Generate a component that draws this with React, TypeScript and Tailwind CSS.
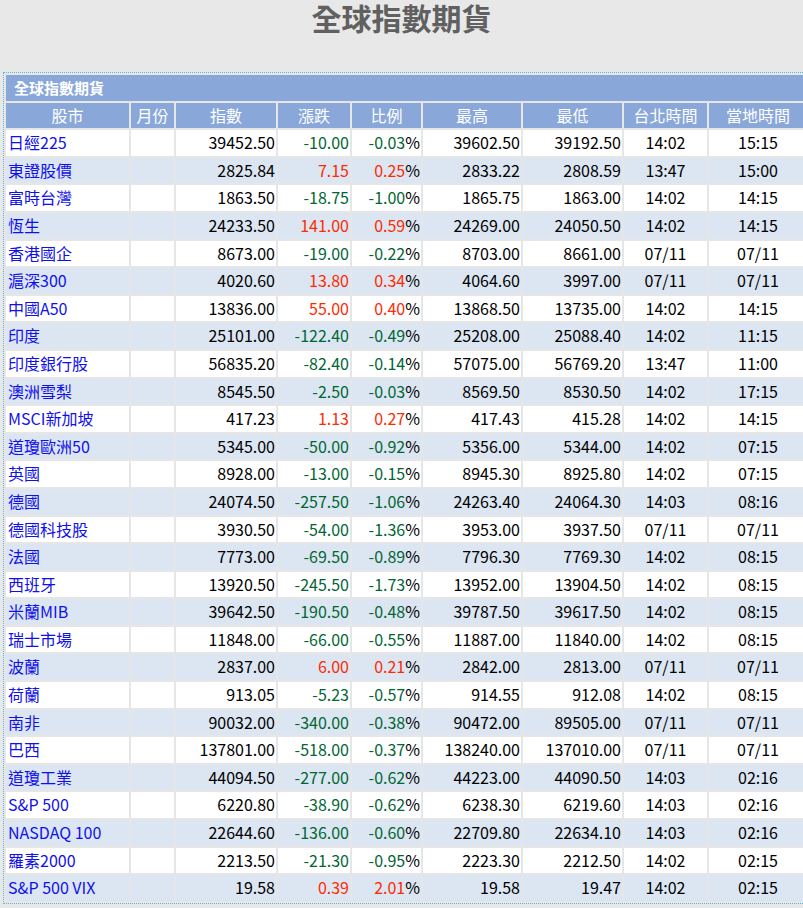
const rows: string[][] = [
["日經225","39452.50","-10.00","-0.03","39602.50","39192.50","14:02","15:15"],
["東證股價","2825.84","7.15","0.25","2833.22","2808.59","13:47","15:00"],
["富時台灣","1863.50","-18.75","-1.00","1865.75","1863.00","14:02","14:15"],
["恆生","24233.50","141.00","0.59","24269.00","24050.50","14:02","14:15"],
["香港國企","8673.00","-19.00","-0.22","8703.00","8661.00","07/11","07/11"],
["滬深300","4020.60","13.80","0.34","4064.60","3997.00","07/11","07/11"],
["中國A50","13836.00","55.00","0.40","13868.50","13735.00","14:02","14:15"],
["印度","25101.00","-122.40","-0.49","25208.00","25088.40","14:02","11:15"],
["印度銀行股","56835.20","-82.40","-0.14","57075.00","56769.20","13:47","11:00"],
["澳洲雪梨","8545.50","-2.50","-0.03","8569.50","8530.50","14:02","17:15"],
["MSCI新加坡","417.23","1.13","0.27","417.43","415.28","14:02","14:15"],
["道瓊歐洲50","5345.00","-50.00","-0.92","5356.00","5344.00","14:02","07:15"],
["英國","8928.00","-13.00","-0.15","8945.30","8925.80","14:02","07:15"],
["德國","24074.50","-257.50","-1.06","24263.40","24064.30","14:03","08:16"],
["德國科技股","3930.50","-54.00","-1.36","3953.00","3937.50","07/11","07/11"],
["法國","7773.00","-69.50","-0.89","7796.30","7769.30","14:02","08:15"],
["西班牙","13920.50","-245.50","-1.73","13952.00","13904.50","14:02","08:15"],
["米蘭MIB","39642.50","-190.50","-0.48","39787.50","39617.50","14:02","08:15"],
["瑞士市場","11848.00","-66.00","-0.55","11887.00","11840.00","14:02","08:15"],
["波蘭","2837.00","6.00","0.21","2842.00","2813.00","07/11","07/11"],
["荷蘭","913.05","-5.23","-0.57","914.55","912.08","14:02","08:15"],
["南非","90032.00","-340.00","-0.38","90472.00","89505.00","07/11","07/11"],
["巴西","137801.00","-518.00","-0.37","138240.00","137010.00","07/11","07/11"],
["道瓊工業","44094.50","-277.00","-0.62","44223.00","44090.50","14:03","02:16"],
["S&P 500","6220.80","-38.90","-0.62","6238.30","6219.60","14:03","02:16"],
["NASDAQ 100","22644.60","-136.00","-0.60","22709.80","22634.10","14:03","02:16"],
["羅素2000","2213.50","-21.30","-0.95","2223.30","2212.50","14:02","02:15"],
["S&P 500 VIX","19.58","0.39","2.01","19.58","19.47","14:02","02:15"],
];
const widths = [123,43,100,72,69,98,99,83,98];
const heads = ["股市","月份","指數","漲跌","比例","最高","最低","台北時間","當地時間"];
export default function App() {
  return (
    <div className="w-[803px] h-[908px] overflow-hidden bg-[#e8e8e8] text-[16px]" style={{fontFamily:'"Noto Sans CJK TC","Noto Sans",sans-serif'}}>
      <h1 className="h-[36px] text-center text-[30px] font-bold leading-[34px] text-[#606060]">全球指數期貨</h1>
      <div className="mt-[36px] ml-[3px] w-[820px] border border-dotted border-[#5ab4dc]">
        <table className="table-fixed border-separate border-spacing-[2px] bg-[#e6e6e6] leading-[25.6px]" style={{width:805}}>
          <colgroup>{widths.map((w,i)=><col key={i} style={{width:w}}/>)}</colgroup>
          <tbody>
            <tr><td colSpan={9} className="bg-[#8aa7da] px-[8px] text-[15px] font-bold text-white">全球指數期貨</td></tr>
            <tr>{heads.map(h=><td key={h} className="bg-[#8aa7da] text-center text-white whitespace-nowrap">{h}</td>)}</tr>
            {rows.map((r,i)=>{
              const up = !r[2].startsWith("-");
              const c = up ? "text-[#ff2a00]" : "text-[#006633]";
              const bg = i%2 ? "bg-[#dce6f2]" : "bg-white";
              return (
                <tr key={i} className={bg}>
                  <td className="px-[2px] text-[#1010ee] whitespace-nowrap overflow-hidden">{r[0]}</td>
                  <td></td>
                  <td className="text-right pr-[1px] text-black">{r[1]}</td>
                  <td className={`text-right pr-[1px] ${c}`}>{r[2]}</td>
                  <td className="text-right pr-[1px]"><span className={c}>{r[3]}</span>%</td>
                  <td className="text-right pr-[1px]">{r[4]}</td>
                  <td className="text-right pr-[1px]">{r[5]}</td>
                  <td className="text-center">{r[6]}</td>
                  <td className="text-center">{r[7]}</td>
                </tr>
              );
            })}
          </tbody>
        </table>
      </div>
    </div>
  );
}
